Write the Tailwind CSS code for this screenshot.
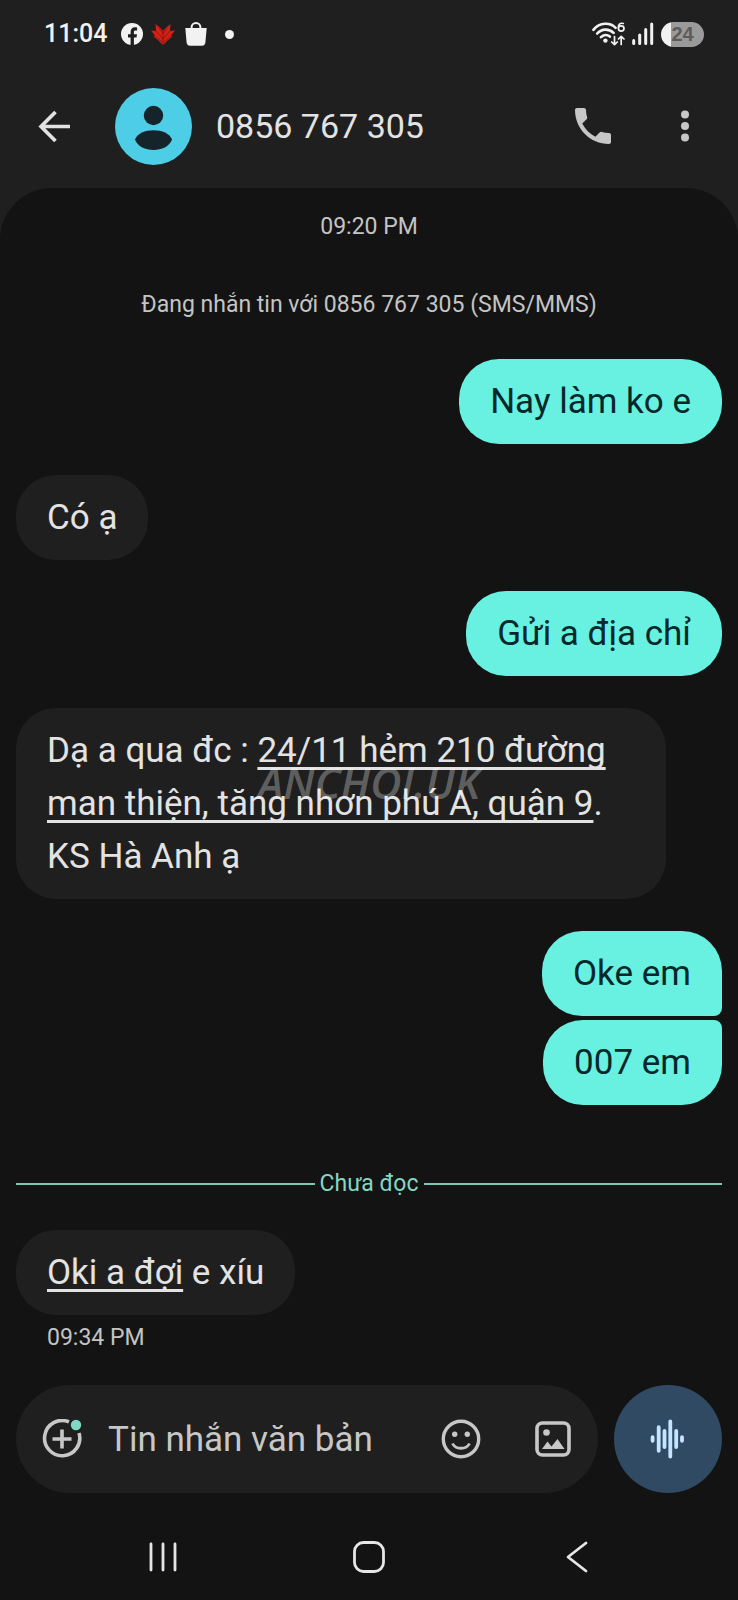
<!DOCTYPE html>
<html lang="vi">
<head>
<meta charset="utf-8">
<meta name="viewport" content="width=device-width, initial-scale=1">
<title>0856 767 305</title>
<script src="https://cdn.jsdelivr.net/npm/@tailwindcss/browser@4"></script>
</head>
<body class="flex min-h-screen flex-col bg-[#1f1f1f] font-[Roboto,'Noto_Sans',sans-serif] text-[#e3e3e3]">

<!-- Status bar -->
<div class="flex h-[68px] items-center justify-between pr-[34px] pl-11">
  <div class="flex items-center text-[25px] font-medium text-[#f2f2f2]">
    <span>11:04</span>
    <svg class="ml-3.5 size-[22px]" viewBox="0 0 22 22"><circle cx="11" cy="11" r="11" fill="#f2f2f2"/><path d="M9.600 22v-7.600H7v-3.200h2.600V9c0-3.100 1.700-4.700 4.300-4.700.9 0 1.800.1 2.200.2v2.900h-1.500c-1.300 0-1.700.7-1.700 1.700v2.100H16l-.5 3.200h-2.600V22z" fill="#1f1f1f"/></svg>
    <svg class="ml-2 h-[22px] w-6" viewBox="0 0 24 22"><path d="M12 22 7 17 2.500 13.500 4 12.500 0 7.500 5 8 4.500 1 10 5.500 12 8l2-2.500L19.500 1 19 8l5-.5-4 5 1.500 1L17 17z" fill="#d81f16"/><path d="M12 8v14M5 8l7 8 7-8M3 12.500l9 7 9-7M8 4.500l4 6 4-6" fill="none" stroke="#7a1813" stroke-width=".8"/></svg>
    <svg class="ml-2.5 h-6 w-[22px]" viewBox="0 0 22 24"><path d="M.3 6h21.400l-1.300 14.500A3.500 3.500 0 0 1 17 23.700H5a3.500 3.500 0 0 1-3.400-3.200z" fill="#f2f2f2"/><path d="M6.600 7.500V5.200a4.400 4.200 0 0 1 8.800 0v2.300" fill="none" stroke="#f2f2f2" stroke-width="2"/></svg>
    <span class="ml-[18px] size-[9px] rounded-full bg-[#f2f2f2]"></span>
  </div>
  <div class="flex items-center">
    <svg class="h-6 w-[33px]" viewBox="0 0 33 24" fill="none" stroke="#f2f2f2" stroke-linecap="round">
      <path d="M1.400 7.800C7.800.1 18.200.1 23.600 5.800M5.200 11.500c4.500-5 11.600-5.200 16.400-.6M9 15.200c2.500-2.600 6.200-2.800 8.800-.6" stroke-width="2.600"/>
      <circle cx="13.400" cy="18.600" r="2.200" fill="#f2f2f2" stroke="none"/>
      <path d="M22.500 14.500v8M19.700 20l2.800 2.700 2.800-2.700M29.200 22.500v-8M26.400 17l2.800-2.700L32 17" stroke-width="1.700" stroke-linejoin="round"/>
      <path d="M31.300 1.500c-3-.9-5 .6-5 4.200M29.200 3.900a2.800 2.600 0 1 1 0 5.200 2.800 2.600 0 0 1 0-5.200z" stroke-width="1.700"/>
    </svg>
    <svg class="ml-[7px] h-6 w-[22px]" viewBox="0 0 22 24" fill="none" stroke="#f2f2f2" stroke-width="3" stroke-linecap="round"><path d="M1.700 18.500v3M7.700 13v8.500M13.700 7.500v14M19.700 2v19.500"/></svg>
    <span class="ml-[7px] flex h-[25px] w-[43px] items-center justify-center rounded-full bg-linear-to-r from-[#f2f2f2] from-24% to-[#9a9a9a] to-24% font-['Liberation_Sans'] text-xl font-bold text-[#5c5c5c]">24</span>
  </div>
</div>

<!-- Conversation header -->
<header class="flex h-[120px] items-center pr-[49px] pb-1 pl-[38px]">
  <button type="button" aria-label="Quay lại" class="shrink-0">
    <svg class="h-8 w-8" viewBox="0 0 32 32" fill="none" stroke="#e3e3e3" stroke-width="3.600"><path d="M32 16.500H3M17.500 2 3 16.500 17.500 31"/></svg>
  </button>
  <svg class="ml-[45px] size-[77px] shrink-0" viewBox="0 0 77 77"><circle cx="38.500" cy="38.500" r="38.500" fill="#4ecde6"/><circle cx="38.500" cy="27.500" r="9.700" fill="#15242b"/><path d="M20 51.500C24 39 53 39 57 51.500 52 65.500 25 65.500 20 51.500z" fill="#15242b"/></svg>
  <h1 class="ml-6 flex-1 text-[34px]">0856 767 305</h1>
  <button type="button" aria-label="Gọi">
    <svg class="size-9" viewBox="3 3 18 18" fill="#c7c7c7"><path d="M6.620 10.790c1.440 2.830 3.760 5.140 6.590 6.590l2.200-2.200c.27-.27.67-.36 1.020-.24 1.120.37 2.330.57 3.570.57.55 0 1 .45 1 1V20c0 .55-.45 1-1 1-9.390 0-17-7.610-17-17 0-.55.45-1 1-1h3.500c.55 0 1 .45 1 1 0 1.250.2 2.450.57 3.570.11.35.03.74-.25 1.020z"/></svg>
  </button>
  <button type="button" aria-label="Tùy chọn khác" class="ml-[70px]">
    <svg class="h-8 w-2" viewBox="0 0 8 32" fill="#c7c7c7" overflow="visible"><circle cx="4" cy="4.500" r="4"/><circle cx="4" cy="16" r="4"/><circle cx="4" cy="27.500" r="4"/></svg>
  </button>
</header>

<div class="flex flex-1 flex-col rounded-t-[52px] bg-[#131313]">
  <!-- Messages -->
  <main class="flex flex-1 flex-col px-4 text-[35px] leading-[53px]">
    <p class="mt-6 text-center text-[23px] leading-[30px] text-[#c4c4c4]">09:20 PM</p>
    <p class="mt-12 text-center text-[23px] leading-[30px] text-[#c4c4c4]">Đang nhắn tin với 0856 767 305 (SMS/MMS)</p>

    <p class="mt-[39px] self-end rounded-[40px] bg-[#68f0e0] px-[31px] py-4 text-[#06282b]">Nay làm ko e</p>
    <p class="mt-[31px] self-start rounded-[40px] bg-[#1f1f1f] px-[31px] py-4">Có ạ</p>
    <p class="mt-[31px] self-end rounded-[40px] bg-[#68f0e0] px-[31px] py-4 text-[#06282b]">Gửi a địa chỉ</p>

    <div class="relative mt-8">
      <p class="max-w-[92%] rounded-[40px] bg-[#1f1f1f] px-[31px] py-4">Dạ a qua đc : <a href="#" class="underline decoration-3 underline-offset-[5px] [text-decoration-skip-ink:none]">24/11 hẻm 210 đường man thiện, tăng nhơn phú A, quận 9</a>. KS Hà Anh ạ</p>
      <span class="pointer-events-none absolute inset-x-0 top-12 text-center font-['Open_Sans'] text-[43px] font-semibold text-white/30 italic">ANCHOI.UK</span>
    </div>

    <div class="mt-8 flex flex-col items-end gap-1">
      <p class="rounded-[40px] rounded-br-lg bg-[#68f0e0] px-[31px] py-4 text-[#06282b]">Oke em</p>
      <p class="rounded-[40px] rounded-tr-lg bg-[#68f0e0] px-[31px] py-4 text-[#06282b]">007 em</p>
    </div>

    <div class="mt-16 flex items-center gap-[5px] text-[23px] leading-[30px] text-[#86d6c3]">
      <span class="h-[2px] flex-1 bg-[#7cc7b3]"></span>Chưa đọc<span class="h-[2px] flex-1 bg-[#7cc7b3]"></span>
    </div>

    <p class="mt-[31px] self-start rounded-[40px] bg-[#1f1f1f] px-[31px] py-4"><a href="#" class="underline decoration-3 underline-offset-[5px] [text-decoration-skip-ink:none]">Oki a đợi</a> e xíu</p>
    <p class="mt-2 px-[31px] text-[23px] leading-[30px] text-[#c4c4c4]">09:34 PM</p>
  </main>

  <!-- Composer -->
  <form class="mt-8 flex items-center gap-4 px-4">
    <div class="flex h-[108px] min-w-0 flex-1 items-center rounded-full bg-[#1f1f1f] pr-[27px] pl-[26px]">
      <button type="button" aria-label="Thêm" class="shrink-0">
        <svg class="size-10" viewBox="0 0 40 40" fill="none" stroke="#c7c7c7" stroke-width="3.600"><path d="M27 2.900A17.600 17.600 0 1 0 37 14M20 10.500v19M10.500 20h19"/><circle cx="34" cy="6" r="5.200" fill="#7fd8c6" stroke="none"/></svg>
      </button>
      <input type="text" aria-label="Tin nhắn văn bản" placeholder="Tin nhắn văn bản" class="ml-[26px] h-16 min-w-0 flex-1 bg-transparent text-[35px] outline-none placeholder:text-[#c7c7c7]">
      <button type="button" aria-label="Biểu tượng cảm xúc" class="shrink-0">
        <svg class="size-10" viewBox="0 0 40 40" fill="none" stroke="#c7c7c7" stroke-width="3.400"><circle cx="20" cy="20" r="17.700"/><path d="M11.500 24.500c3 6.300 14 6.300 17 0" stroke-width="2.800"/><g fill="#c7c7c7" stroke="none"><circle cx="13.700" cy="15.300" r="2.700"/><circle cx="26.300" cy="15.300" r="2.700"/></g></svg>
      </button>
      <button type="button" aria-label="Thư viện ảnh" class="ml-[54px] shrink-0">
        <svg class="size-9" viewBox="0 0 36 36"><rect x="2" y="2" width="32" height="32" rx="5.500" fill="none" stroke="#c7c7c7" stroke-width="3.600"/><g fill="#c7c7c7"><circle cx="11.500" cy="11.500" r="3.300"/><path d="m7 28 5.500-7.500 4 5 6-7.500L29.500 28z"/></g></svg>
      </button>
    </div>
    <button type="button" aria-label="Ghi âm" class="flex size-[108px] shrink-0 items-center justify-center rounded-full bg-[#304a63]">
      <svg class="h-10 w-9" viewBox="0 0 36 40" fill="none" stroke="#c5e4fd" stroke-width="3.800" stroke-linecap="round"><path d="M2.600 18.200v3.600M8.700 8.200v23.600M14.500 12v16M20.300 2.500v35M26.200 12v16M32 18.200v3.600"/></svg>
    </button>
  </form>

  <!-- System navigation -->
  <nav class="mt-5 flex h-[88px] items-center justify-center gap-[174px]" aria-label="Điều hướng hệ thống">
    <button type="button" aria-label="Gần đây"><svg class="h-8 w-8" viewBox="0 0 32 32" fill="none" stroke="#e6e6e6" stroke-width="2.800" stroke-linecap="round"><path d="M4 3v26M16 3v26M28 3v26"/></svg></button>
    <button type="button" aria-label="Màn hình chính"><svg class="h-8 w-8" viewBox="0 0 32 32" fill="none" stroke="#e6e6e6" stroke-width="2.800"><rect x="1.500" y="1.500" width="29" height="29" rx="9"/></svg></button>
    <button type="button" aria-label="Trở lại"><svg class="h-8 w-8" viewBox="0 0 32 32" fill="none" stroke="#e6e6e6" stroke-width="2.800" stroke-linecap="round" stroke-linejoin="round"><path d="M27 2 9 16 27 30"/></svg></button>
  </nav>
</div>
</body>
</html>
